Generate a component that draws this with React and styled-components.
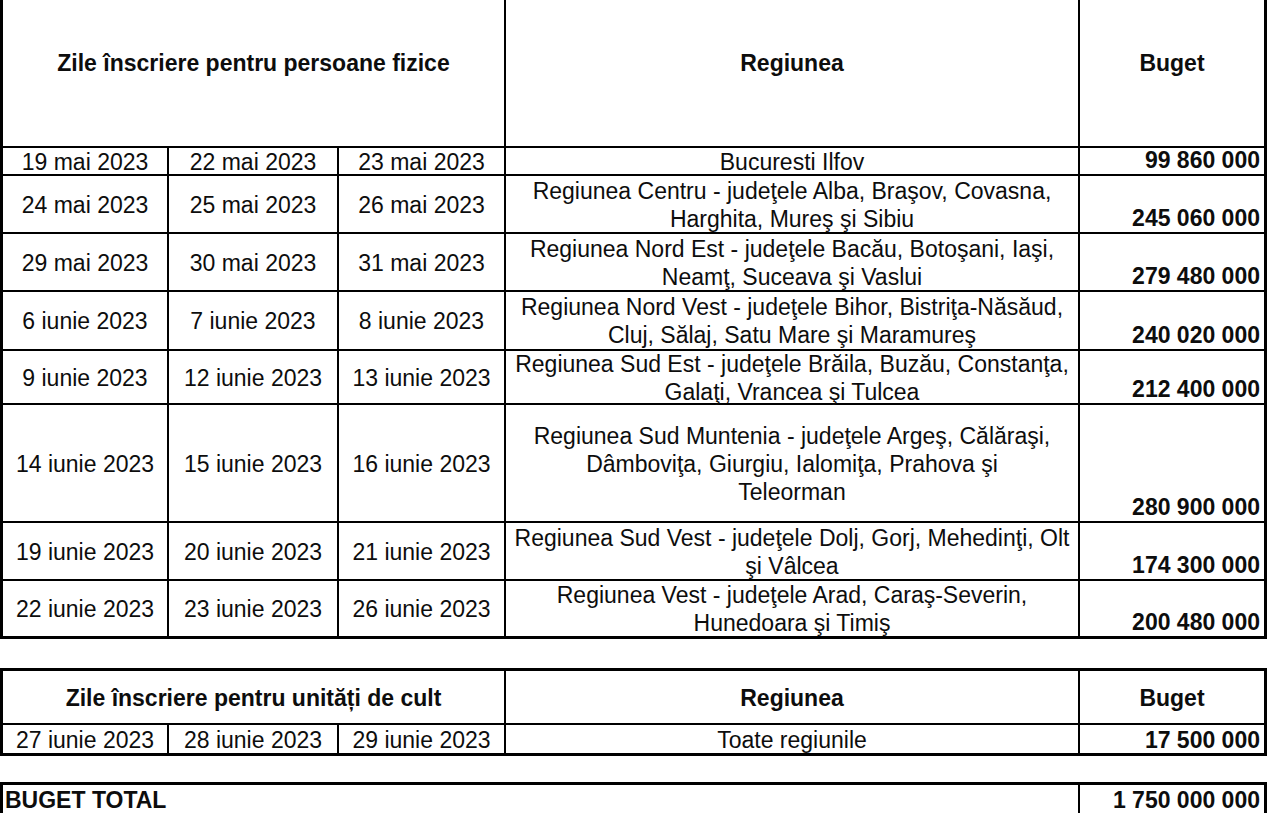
import React from 'react';
import styled, { createGlobalStyle } from 'styled-components';

const GlobalStyle = createGlobalStyle`
  html, body {
    margin: 0;
    padding: 0;
    background: #ffffff;
  }
  body {
    font-family: "Liberation Sans", Arial, sans-serif;
    color: #0d0d0d;
    overflow: hidden;
  }
`;

const Page = styled.div`
  display: flex;
  flex-direction: column;
  width: 1280px;
`;

const Sheet = styled.div`
  display: grid;
  grid-template-columns: 166px 170px 167px 574px 186px;
  grid-template-rows: ${(p) => p.$rows};
  width: 1267px;
  box-sizing: border-box;
  border-left: 3px solid #000;
  border-right: 1px solid #000;
  border-bottom: 1px solid #000;
  border-top: ${(p) => (p.$top ? '3px solid #000' : 'none')};
  margin-top: ${(p) => p.$gap || 0}px;
`;

const Cell = styled.div`
  grid-column: span ${(p) => p.$span || 1};
  box-sizing: border-box;
  border-right: 2px solid #000;
  border-bottom: 2px solid #000;
  display: flex;
  flex-direction: column;
  justify-content: ${(p) => (p.$valign === 'end' ? 'flex-end' : 'center')};
  text-align: ${(p) => p.$align || 'center'};
  font-size: 23px;
  line-height: 28px;
  font-weight: ${(p) => (p.$bold ? 700 : 400)};
  padding: ${(p) => (p.$valign === 'end' ? 0 : 1)}px
    ${(p) => (p.$align === 'right' ? '4px' : '0')} ${(p) => p.$lift || 0}px
    ${(p) => (p.$align === 'left' ? '2px' : '0')};
  white-space: nowrap;
  overflow: visible;
`;

const regions = [
  {
    h: 28,
    dates: ['19 mai 2023', '22 mai 2023', '23 mai 2023'],
    lines: ['Bucuresti Ilfov'],
    budget: '99 860 000',
  },
  {
    h: 58,
    dates: ['24 mai 2023', '25 mai 2023', '26 mai 2023'],
    lines: ['Regiunea Centru - judeţele Alba, Braşov, Covasna,', 'Harghita, Mureş şi Sibiu'],
    budget: '245 060 000',
  },
  {
    h: 58,
    dates: ['29 mai 2023', '30 mai 2023', '31 mai 2023'],
    lines: ['Regiunea Nord Est - judeţele Bacău, Botoşani, Iaşi,', 'Neamţ, Suceava şi Vaslui'],
    budget: '279 480 000',
  },
  {
    h: 59,
    dates: ['6 iunie 2023', '7 iunie 2023', '8 iunie 2023'],
    lines: ['Regiunea Nord Vest - judeţele Bihor, Bistriţa-Năsăud,', 'Cluj, Sălaj, Satu Mare şi Maramureş'],
    budget: '240 020 000',
  },
  {
    h: 54,
    dates: ['9 iunie 2023', '12 iunie 2023', '13 iunie 2023'],
    lines: ['Regiunea Sud Est - judeţele Brăila, Buzău, Constanţa,', 'Galaţi, Vrancea şi Tulcea'],
    budget: '212 400 000',
  },
  {
    h: 118,
    dates: ['14 iunie 2023', '15 iunie 2023', '16 iunie 2023'],
    lines: [
      'Regiunea Sud Muntenia - judeţele Argeş, Călăraşi,',
      'Dâmboviţa, Giurgiu, Ialomiţa, Prahova şi',
      'Teleorman',
    ],
    budget: '280 900 000',
  },
  {
    h: 58,
    dates: ['19 iunie 2023', '20 iunie 2023', '21 iunie 2023'],
    lines: ['Regiunea Sud Vest - judeţele Dolj, Gorj, Mehedinţi, Olt', 'şi Vâlcea'],
    budget: '174 300 000',
  },
  {
    h: 57,
    dates: ['22 iunie 2023', '23 iunie 2023', '26 iunie 2023'],
    lines: ['Regiunea Vest - judeţele Arad, Caraş-Severin,', 'Hunedoara şi Timiş'],
    budget: '200 480 000',
  },
];

function Lines({ lines }) {
  return lines.map((l, i) => <span key={i}>{l}</span>);
}

export default function App() {
  const rows1 = ['148px', ...regions.map((r) => `${r.h}px`)].join(' ');

  return (
    <Page>
      <GlobalStyle />

      <Sheet $rows={rows1}>
        <Cell $span={3} $bold $lift={22}>
          Zile înscriere pentru persoane fizice
        </Cell>
        <Cell $bold $lift={22}>Regiunea</Cell>
        <Cell $bold $lift={22}>Buget</Cell>

        {regions.map((r) => (
          <React.Fragment key={r.dates[0]}>
            {r.dates.map((d) => (
              <Cell key={d}>{d}</Cell>
            ))}
            <Cell>
              <Lines lines={r.lines} />
            </Cell>
            <Cell $align="right" $valign="end" $bold>
              {r.budget}
            </Cell>
          </React.Fragment>
        ))}
      </Sheet>

      <Sheet $rows="54px 30px" $top $gap={29}>
        <Cell $span={3} $bold>Zile înscriere pentru unități de cult</Cell>
        <Cell $bold>Regiunea</Cell>
        <Cell $bold>Buget</Cell>
        <Cell>27 iunie 2023</Cell>
        <Cell>28 iunie 2023</Cell>
        <Cell>29 iunie 2023</Cell>
        <Cell>Toate regiunile</Cell>
        <Cell $align="right" $bold>17 500 000</Cell>
      </Sheet>

      <Sheet $rows="30px" $top $gap={26}>
        <Cell $span={4} $align="left" $bold>BUGET TOTAL</Cell>
        <Cell $align="right" $bold>1 750 000 000</Cell>
      </Sheet>
    </Page>
  );
}
